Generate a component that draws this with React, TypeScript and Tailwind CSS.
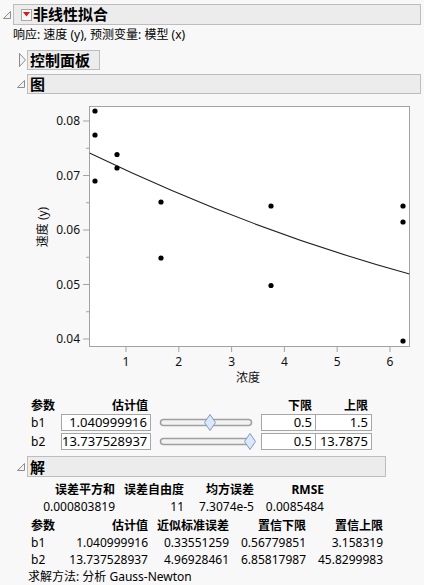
import React from "react";

const OpenTri = () => (
  <svg width="8" height="8" viewBox="0 0 8 8" className="block">
    <path d="M7.5 0.5 L7.5 7.5 L0.5 7.5 Z" fill="#f4f4f4" stroke="#8c8c8c" strokeWidth="1" />
  </svg>
);

const ClosedTri = () => (
  <svg width="7" height="14" viewBox="0 0 7 14" className="block">
    <path d="M0.5 0.5 L6.5 7 L0.5 13.5 Z" fill="#f4f4f4" stroke="#8c8c8c" strokeWidth="1" />
  </svg>
);

const RedButton = () => (
  <div className="w-[11px] h-[12px] border border-[#a9a9a9] bg-[#f6f6f6] flex items-center justify-center">
    <svg width="7" height="5" viewBox="0 0 7 5" className="block">
      <path d="M0 0 L7 0 L3.5 4.5 Z" fill="#d4191c" />
    </svg>
  </div>
);

const points: [number, number][] = [
  [95, 111], [95, 135], [95, 181], [117, 154.5], [117, 168], [161, 202], [161, 258],
  [271, 206], [271, 285.5], [403, 206], [403, 222], [403, 341],
];

const yTicks = [
  { y: 121, label: "0.08" },
  { y: 175.5, label: "0.07" },
  { y: 230, label: "0.06" },
  { y: 284.5, label: "0.05" },
  { y: 339, label: "0.04" },
];
const yMinor = [148.25, 202.75, 257.25, 311.75];
const xTicks = [
  { x: 126, label: "1" },
  { x: 178.8, label: "2" },
  { x: 231.6, label: "3" },
  { x: 284.4, label: "4" },
  { x: 337.2, label: "5" },
  { x: 390, label: "6" },
];

const Chart = () => (
  <svg width="424" height="304" viewBox="0 94 424 304" className="block">
    <defs>
      <clipPath id="plotclip">
        <rect x="89.5" y="106.5" width="320" height="240" />
      </clipPath>
    </defs>
    <rect x="89.5" y="106.5" width="320" height="240" fill="#ffffff" stroke="#a3a3a3" strokeWidth="1" />
    {yTicks.map((t) => (
      <g key={t.label}>
        <line x1="83" y1={t.y} x2="89" y2={t.y} stroke="#a3a3a3" strokeWidth="1" />
        <text x="80" y={t.y + 4} fontSize="12" textAnchor="end" fill="#111">
          {t.label}
        </text>
      </g>
    ))}
    {yMinor.map((y) => (
      <line key={y} x1="86" y1={y} x2="89" y2={y} stroke="#a3a3a3" strokeWidth="1" />
    ))}
    {xTicks.map((t) => (
      <g key={t.label}>
        <line x1={t.x} y1="347" x2={t.x} y2="352" stroke="#a3a3a3" strokeWidth="1" />
        <text x={t.x} y="366" fontSize="12" textAnchor="middle" fill="#111">
          {t.label}
        </text>
      </g>
    ))}
    <text x="248" y="382" fontSize="12" textAnchor="middle" fill="#111">
      浓度
    </text>
    <text
      x="42"
      y="227"
      fontSize="12"
      textAnchor="middle"
      dominantBaseline="central"
      fill="#111"
      transform="rotate(-90 42 227)"
    >
      速度 (y)
    </text>
    <g clipPath="url(#plotclip)">
      <path d="M89.5 153 Q249 230 409.5 274" fill="none" stroke="#222" strokeWidth="1.1" />
      {points.map(([x, y], i) => (
        <circle key={i} cx={x} cy={y} r="2.6" fill="#000" />
      ))}
    </g>
  </svg>
);

const Slider = ({ pos }: { pos: number }) => (
  <svg width="110" height="17" viewBox="0 0 110 17" className="block">
    <rect x="9.5" y="5.5" width="91" height="6" rx="3" fill="#f2f2f2" stroke="#a0a0a0" strokeWidth="1.5" />
    <path
      d={`M${pos} 0.5 L${pos + 5.5} 8.5 L${pos} 16.5 L${pos - 5.5} 8.5 Z`}
      fill="#dce8f8"
      stroke="#7b9bc6"
      strokeWidth="1"
    />
  </svg>
);

export default function App() {
  return (
    <div className="w-[424px] h-[585px] overflow-hidden bg-[#f8f8f8] text-black font-[family-name:Noto_Sans,Noto_Sans_CJK_SC,sans-serif]">
      <div className="pt-[4px]">
        {/* Title header */}
        <div className="flex items-center h-[21px]">
          <div className="w-[13px] flex justify-center pl-[1px]">
            <OpenTri />
          </div>
          <div className="w-[408px] h-[21px] border border-[#bdbdbd] bg-[#ececec] flex items-center pl-[7px]">
            <RedButton />
            <span className="ml-[1px] text-[15px] font-bold leading-[19px]">非线性拟合</span>
          </div>
        </div>

        {/* Subtitle */}
        <div className="h-[20px] pl-[13px] flex items-center text-[12px] leading-[16px]">
          响应: 速度 (y), 预测变量: 模型 (x)
        </div>

        {/* Control panel */}
        <div className="mt-[5px] flex items-center h-[20px]">
          <div className="w-[27px] pl-[19px]">
            <ClosedTri />
          </div>
          <div className="w-[73px] h-[20px] border border-[#bdbdbd] bg-[#ececec] flex items-center pl-[2px]">
            <span className="text-[15px] font-bold leading-[18px]">控制面板</span>
          </div>
        </div>

        {/* Graph header */}
        <div className="mt-[4px] flex items-center h-[20px]">
          <div className="w-[27px] pl-[17px]">
            <OpenTri />
          </div>
          <div className="w-[394px] h-[20px] border border-[#bdbdbd] bg-[#ececec] flex items-center pl-[2px]">
            <span className="text-[15px] font-bold leading-[18px]">图</span>
          </div>
        </div>

        <Chart />

        {/* Parameter table */}
        <div className="pl-[31px] text-[12px]">
          <div className="flex h-[16px] items-center font-bold leading-[16px]">
            <div className="w-[30px]">参数</div>
            <div className="w-[90px] text-right pr-[3px]">估计值</div>
            <div className="w-[110px]" />
            <div className="w-[55px] text-right pr-[4px]">下限</div>
            <div className="w-[56px] text-right pr-[4px]">上限</div>
          </div>
          {[
            { name: "b1", v: "1.040999916", pos: 59, lo: "0.5", hi: "1.5" },
            { name: "b2", v: "13.737528937", pos: 99, lo: "0.5", hi: "13.7875" },
          ].map((r, i) => (
            <div key={r.name} className={`flex h-[17px] items-center ${i === 1 ? "mt-[2px]" : ""}`}>
              <div className="w-[30px] leading-[17px]">{r.name}</div>
              <div className="w-[90px] h-[17px] border border-[#a6a6a6] bg-white text-right pr-[3px] text-[13px] leading-[15px]">
                {r.v}
              </div>
              <div className="w-[110px]">
                <Slider pos={r.pos} />
              </div>
              <div className="w-[55px] h-[17px] border border-[#a6a6a6] bg-white text-right pr-[3px] text-[13px] leading-[15px]">
                {r.lo}
              </div>
              <div className="w-[56px] h-[17px] border-y border-r border-[#a6a6a6] bg-white text-right pr-[3px] text-[13px] leading-[15px]">
                {r.hi}
              </div>
            </div>
          ))}
        </div>

        {/* Solution header */}
        <div className="mt-[6px] flex items-center h-[21px]">
          <div className="w-[27px] pl-[17px]">
            <OpenTri />
          </div>
          <div className="w-[359px] h-[21px] border border-[#bdbdbd] bg-[#ececec] flex items-center pl-[2px]">
            <span className="text-[15px] font-bold leading-[18px]">解</span>
          </div>
        </div>

        {/* Summary table */}
        <div className="mt-[4px] pl-[42px] text-[12px] leading-[17px]">
          <div className="flex h-[17px] font-bold">
            <div className="w-[73px] text-right">误差平方和</div>
            <div className="w-[69px] text-right">误差自由度</div>
            <div className="w-[70px] text-right">均方误差</div>
            <div className="w-[70px] text-right">RMSE</div>
          </div>
          <div className="flex h-[17px]">
            <div className="w-[73px] text-right">0.000803819</div>
            <div className="w-[69px] text-right">11</div>
            <div className="w-[70px] text-right">7.3074e-5</div>
            <div className="w-[70px] text-right">0.0085484</div>
          </div>
        </div>

        {/* Estimates table */}
        <div className="mt-[2px] pl-[31px] text-[12px] leading-[17px]">
          <div className="flex h-[17px] font-bold">
            <div className="w-[38px]">参数</div>
            <div className="w-[79px] text-right">估计值</div>
            <div className="w-[81px] text-right">近似标准误差</div>
            <div className="w-[77px] text-right">置信下限</div>
            <div className="w-[77px] text-right">置信上限</div>
          </div>
          <div className="flex h-[17px]">
            <div className="w-[38px]">b1</div>
            <div className="w-[79px] text-right">1.040999916</div>
            <div className="w-[81px] text-right">0.33551259</div>
            <div className="w-[77px] text-right">0.56779851</div>
            <div className="w-[77px] text-right">3.158319</div>
          </div>
          <div className="flex h-[17px]">
            <div className="w-[38px]">b2</div>
            <div className="w-[79px] text-right">13.737528937</div>
            <div className="w-[81px] text-right">4.96928461</div>
            <div className="w-[77px] text-right">6.85817987</div>
            <div className="w-[77px] text-right">45.8299983</div>
          </div>
        </div>

        <div className="pl-[28px] h-[17px] text-[12px] leading-[17px]">求解方法: 分析 Gauss-Newton</div>
      </div>
    </div>
  );
}
